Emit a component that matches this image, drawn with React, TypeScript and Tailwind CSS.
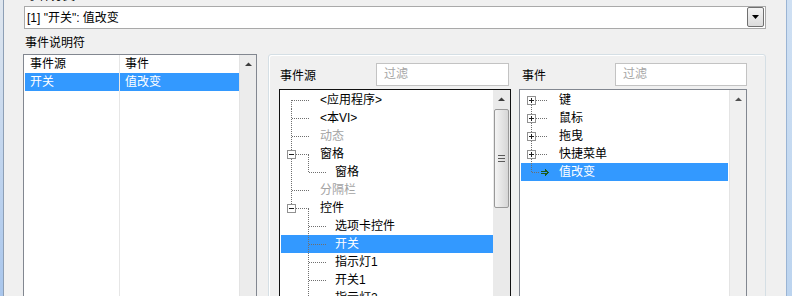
import React from 'react';

type Row = {
  text: string;
  w: number;
  d: string;
  box?: 'minus' | 'plus';
  arrow?: boolean;
  gray?: boolean;
  sel?: boolean;
};

const CHILD = 'M27.5 0V18M28 9.5H46';
const TOP = 'M10.5 0V18M11 9.5H29';

const sourceRows: Row[] = [
  { text: '<应用程序>', w: 39, d: 'M10.5 9V18M11 9.5H29' },
  { text: '<本VI>', w: 39, d: TOP },
  { text: '动态', w: 39, d: TOP, gray: true },
  { text: '窗格', w: 39, d: 'M10.5 0V5M10.5 14V18M15 9.5H29M27.5 10V18', box: 'minus' },
  { text: '窗格', w: 54, d: 'M10.5 0V18M27.5 0V9M28 9.5H46' },
  { text: '分隔栏', w: 39, d: TOP, gray: true },
  { text: '控件', w: 39, d: 'M10.5 0V5M15 9.5H29M27.5 10V18', box: 'minus' },
  { text: '选项卡控件', w: 54, d: CHILD },
  { text: '开关', w: 54, d: CHILD, sel: true },
  { text: '指示灯1', w: 54, d: CHILD },
  { text: '开关1', w: 54, d: CHILD },
  { text: '指示灯2', w: 54, d: CHILD },
];

const MID = 'M10.5 0V5M10.5 14V18M15 9.5H27';

const eventRows: Row[] = [
  { text: '键', w: 38, d: 'M10.5 14V18M15 9.5H27', box: 'plus' },
  { text: '鼠标', w: 38, d: MID, box: 'plus' },
  { text: '拖曳', w: 38, d: MID, box: 'plus' },
  { text: '快捷菜单', w: 38, d: MID, box: 'plus' },
  { text: '值改变', w: 38, d: 'M10.5 0V9M11 9.5H19', arrow: true, sel: true },
];

function Gutter({ row }: { row: Row }) {
  return (
    <svg width={row.w} height={18} className="shrink-0" shapeRendering="crispEdges">
      <path d={row.d} stroke="#6f6f6f" strokeDasharray="1 1" fill="none" />
      {row.box && (
        <g>
          <rect x={6.5} y={5.5} width={8} height={8} fill="#fff" stroke="#919191" />
          <path d="M8 9.5H13" stroke="#1f1f1f" />
          {row.box === 'plus' && <path d="M10.5 7V12" stroke="#1f1f1f" />}
        </g>
      )}
      {row.arrow && (
        <path d="M20 8.5H25M20 10.5H25M24 6.5L27 9.5L24 12.5" stroke="#1c5a1c" fill="none" />
      )}
    </svg>
  );
}

function TreeRow({ row }: { row: Row }) {
  const tone = row.sel ? 'bg-[#3399ff] text-white' : row.gray ? 'text-[#a3a3a3]' : 'text-black';
  return (
    <div className={`flex h-[18px] shrink-0 items-center ${tone}`}>
      <Gutter row={row} />
      <span className="whitespace-nowrap leading-[18px]">{row.text}</span>
    </div>
  );
}

function UpArrow({ color = '#3c3c3c' }: { color?: string }) {
  return (
    <div className="flex h-[17px] shrink-0 items-center justify-center">
      <svg width="7" height="4">
        <path d="M0 4H7L3.5 0.5Z" fill={color} />
      </svg>
    </div>
  );
}

function Filter({ w, mr }: { w: string; mr?: string }) {
  return (
    <div className={`${w} ${mr ?? ''} h-[23px] border border-[#c3c3c3] bg-white pl-[7px] leading-[21px] text-[#a6a6a6]`}>
      过滤
    </div>
  );
}

export default function App() {
  return (
    <div className="flex h-[296px] w-[792px] overflow-hidden bg-[#f0f0f0] font-['Liberation_Sans','Noto_Sans_CJK_SC',sans-serif] text-[12px] text-black">
      <div className="w-[4px] shrink-0 border-r border-[#8d9fb5] bg-gradient-to-b from-[#dfe6ee] via-[#c3d6ee] to-[#a9c6ec]" />

      <div className="flex min-h-0 flex-1 flex-col pl-[19px]">
        {/* label cut off by the top edge */}
        <div className="h-[6px] shrink-0 overflow-hidden pl-[4px]">
          <div className="-mt-[12px] leading-[16px]">事件分支</div>
        </div>

        {/* combobox */}
        <div className="ml-[1px] flex h-[23px] w-[742px] shrink-0 items-start border border-[#a9a9a9] bg-white pl-[2px] pr-[1px]">
          <span className="flex-1 self-center leading-[16px]">[1] "开关": 值改变</span>
          <div className="flex h-[20px] w-[17px] items-center justify-center rounded-[2px] border border-[#707070] bg-gradient-to-b from-[#f4f4f4] to-[#dcdcdc]">
            <svg width="7" height="4">
              <path d="M0 0H7L3.5 4Z" fill="#000" />
            </svg>
          </div>
        </div>

        <div className="h-[25px] shrink-0 pl-[2px] pt-[6px] leading-[16px]">事件说明符</div>

        <div className="flex shrink-0 items-start">
          {/* event specifiers list */}
          <div className="flex h-[250px] w-[234px] border border-[#828790] bg-white">
            <div className="flex flex-1 flex-col">
              <div className="flex h-[18px] leading-[18px]">
                <div className="w-[95px] pl-[6px]">事件源</div>
                <div className="w-px bg-[#e6e6e6]" />
                <div className="flex-1 pl-[5px]">事件</div>
              </div>
              <div className="flex h-[18px] leading-[18px] text-white">
                <div className="ml-px w-[94px] bg-[#3399ff] pl-[5px]">开关</div>
                <div className="w-px bg-[#e6e6e6]" />
                <div className="flex-1 bg-[#3399ff] pl-[5px]">值改变</div>
              </div>
              <div className="flex flex-1">
                <div className="w-[95px]" />
                <div className="w-px bg-[#e6e6e6]" />
                <div className="flex-1" />
              </div>
            </div>
            <div className="w-[17px] border-l border-[#e3e3e3] bg-[#ececec]">
              <UpArrow />
            </div>
          </div>

          {/* group box */}
          <div className="ml-[11px] flex h-[250px] w-[498px] gap-[8px] rounded-[3px] border border-[#d5dfe5] pl-[10px] pr-[18px] pt-[8px] shadow-[inset_1px_1px_0_#ffffff]">
            <div className="flex w-[232px] flex-col">
              <div className="flex h-[26px] shrink-0 items-start justify-between">
                <div className="mt-[5px] pl-px leading-[16px]">事件源</div>
                <Filter w="w-[133px]" mr="mr-[2px]" />
              </div>
              <div className="flex h-[220px] shrink-0 border border-[#111111] bg-white">
                <div className="flex flex-1 flex-col overflow-hidden pl-px pt-px">
                  {sourceRows.map((r, i) => (
                    <TreeRow key={i} row={r} />
                  ))}
                </div>
                <div className="flex w-[17px] flex-col bg-[#eaeaea]">
                  <UpArrow />
                  <div className="mx-px mt-[2px] flex h-[99px] shrink-0 items-center justify-center rounded-[2px] border border-[#999999] bg-gradient-to-r from-[#f4f4f4] to-[#d6d6d6]">
                    <svg width="7" height="7" shapeRendering="crispEdges">
                      <path d="M0 0.5H7M0 3.5H7M0 6.5H7" stroke="#5a5a5a" />
                    </svg>
                  </div>
                </div>
              </div>
            </div>

            <div className="flex w-[228px] flex-col">
              <div className="flex h-[26px] shrink-0 items-start justify-between">
                <div className="mt-[5px] pl-[3px] leading-[16px]">事件</div>
                <Filter w="w-[132px]" />
              </div>
              <div className="flex h-[220px] shrink-0 border border-[#828790] bg-white">
                <div className="flex flex-1 flex-col px-px pt-px">
                  {eventRows.map((r, i) => (
                    <TreeRow key={i} row={r} />
                  ))}
                </div>
                <div className="w-[17px] border-l border-[#e4e4e4] bg-[#f0f0f0]">
                  <UpArrow color="#505050" />
                </div>
              </div>
            </div>
          </div>
        </div>
      </div>

      <div className="w-[6px] shrink-0 border-l border-[#9ab4d4] bg-gradient-to-b from-[#cfe0f3] to-[#bcd4ef]" />
    </div>
  );
}
